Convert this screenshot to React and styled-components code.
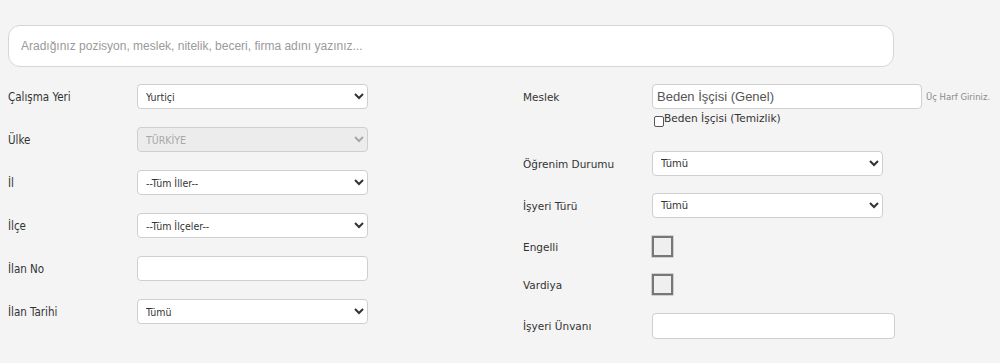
import React from "react";
import styled, { createGlobalStyle } from "styled-components";

const Global = createGlobalStyle`
  html, body { margin: 0; padding: 0; background: #f4f4f4; }
  body { font-family: "DejaVu Sans", Verdana, sans-serif; }
`;

const Page = styled.div`
  width: 1000px;
  height: 363px;
  box-sizing: border-box;
  padding: 25px 0 0 8px;
  background: #f4f4f4;
`;

const Search = styled.input`
  display: block;
  box-sizing: border-box;
  width: 886px;
  height: 42px;
  border: 1px solid #d6d6d6;
  border-radius: 12px;
  background: #fff;
  padding: 0 12px;
  font-family: "Liberation Sans", Arial, sans-serif;
  font-size: 12px;
  color: #555;
  outline: none;
  &::placeholder { color: #9a9a9a; }
`;

const Columns = styled.div`
  display: grid;
  grid-template-columns: 515px 1fr;
`;

const Column = styled.div`
  display: flex;
  flex-direction: column;
`;

const Row = styled.div`
  display: flex;
  align-items: center;
  margin-top: ${(p) => p.$mt}px;
  height: ${(p) => p.$h || 25}px;
`;

const Label = styled.label`
  width: 129px;
  flex: none;
  font-family: ${(p) =>
    p.$wide
      ? `"DejaVu Sans", Verdana, sans-serif`
      : `"DejaVu Sans Condensed", "DejaVu Sans", Tahoma, sans-serif`};
  font-size: ${(p) => (p.$wide ? 10.5 : 11.5)}px;
  color: #333;
`;

const Select = styled.select`
  box-sizing: border-box;
  width: ${(p) => p.$w || 231}px;
  height: 25px;
  border: 1px solid #cfcfcf;
  border-radius: 4px;
  background: ${(p) => (p.disabled ? "#ececec" : "#fff")};
  color: ${(p) => (p.disabled ? "#a8a8a8" : "#333")};
  font-family: ${(p) =>
    p.$wide
      ? `"DejaVu Sans", Verdana, sans-serif`
      : `"DejaVu Sans Condensed", "DejaVu Sans", Tahoma, sans-serif`};
  font-size: ${(p) => (p.$wide ? 10 : 10.5)}px;
  padding: 0 4px;
  outline: none;
  opacity: 1;
`;

const TextInput = styled.input`
  box-sizing: border-box;
  width: ${(p) => p.$w}px;
  height: ${(p) => p.$h || 25}px;
  border: 1px solid #cfcfcf;
  border-radius: 4px;
  background: #fff;
  padding: 0 4px;
  font-family: "Liberation Sans", Arial, sans-serif;
  font-size: 13px;
  color: #555;
  outline: none;
`;

const Hint = styled.span`
  margin-left: 4px;
  font-family: "DejaVu Sans", Verdana, sans-serif;
  font-size: 8.5px;
  color: #888;
`;

const SubOption = styled.label`
  display: flex;
  align-items: center;
  margin: 2px 0 0 129px;
  height: 14px;
  font-family: "DejaVu Sans", Verdana, sans-serif;
  font-size: 10.6px;
  color: #333;
`;

const SmallBox = styled.span`
  box-sizing: border-box;
  width: 10px;
  height: 11px;
  margin: 6px 0 0 2px;
  border: 1px solid #555;
  border-radius: 2px;
  background: #fff;
  flex: none;
`;

const BigBox = styled.span`
  box-sizing: border-box;
  width: 21px;
  height: 21px;
  border: 2px solid #777;
  background: #efefef;
  box-shadow: 0 0 0 0.5px #aaa;
`;

function LeftRow({ label, mt, children }) {
  return (
    <Row $mt={mt}>
      <Label>{label}</Label>
      {children}
    </Row>
  );
}

function RightRow({ label, mt, h, children }) {
  return (
    <Row $mt={mt} $h={h}>
      <Label $wide>{label}</Label>
      {children}
    </Row>
  );
}

export default function App() {
  return (
    <Page>
      <Global />
      <Search placeholder="Aradığınız pozisyon, meslek, nitelik, beceri, firma adını yazınız..." />
      <Columns>
        <Column>
          <LeftRow label="Çalışma Yeri" mt={17}>
            <Select defaultValue="Yurtiçi">
              <option>Yurtiçi</option>
            </Select>
          </LeftRow>
          <LeftRow label="Ülke" mt={18}>
            <Select disabled defaultValue="TÜRKİYE">
              <option>TÜRKİYE</option>
            </Select>
          </LeftRow>
          <LeftRow label="İl" mt={18}>
            <Select defaultValue="--Tüm İller--">
              <option>--Tüm İller--</option>
            </Select>
          </LeftRow>
          <LeftRow label="İlçe" mt={18}>
            <Select defaultValue="--Tüm İlçeler--">
              <option>--Tüm İlçeler--</option>
            </Select>
          </LeftRow>
          <LeftRow label="İlan No" mt={18}>
            <TextInput $w={231} />
          </LeftRow>
          <LeftRow label="İlan Tarihi" mt={18}>
            <Select defaultValue="Tümü">
              <option>Tümü</option>
            </Select>
          </LeftRow>
        </Column>
        <Column>
          <RightRow label="Meslek" mt={17}>
            <TextInput $w={270} defaultValue="Beden İşçisi (Genel)" />
            <Hint>Üç Harf Giriniz.</Hint>
          </RightRow>
          <SubOption>
            <SmallBox />
            Beden İşçisi (Temizlik)
          </SubOption>
          <RightRow label="Öğrenim Durumu" mt={26}>
            <Select $wide defaultValue="Tümü">
              <option>Tümü</option>
            </Select>
          </RightRow>
          <RightRow label="İşyeri Türü" mt={17}>
            <Select $wide defaultValue="Tümü">
              <option>Tümü</option>
            </Select>
          </RightRow>
          <RightRow label="Engelli" mt={18} h={21}>
            <BigBox />
          </RightRow>
          <RightRow label="Vardiya" mt={17} h={21}>
            <BigBox />
          </RightRow>
          <RightRow label="İşyeri Ünvanı" mt={18} h={26}>
            <TextInput $w={243} $h={26} />
          </RightRow>
        </Column>
      </Columns>
    </Page>
  );
}
